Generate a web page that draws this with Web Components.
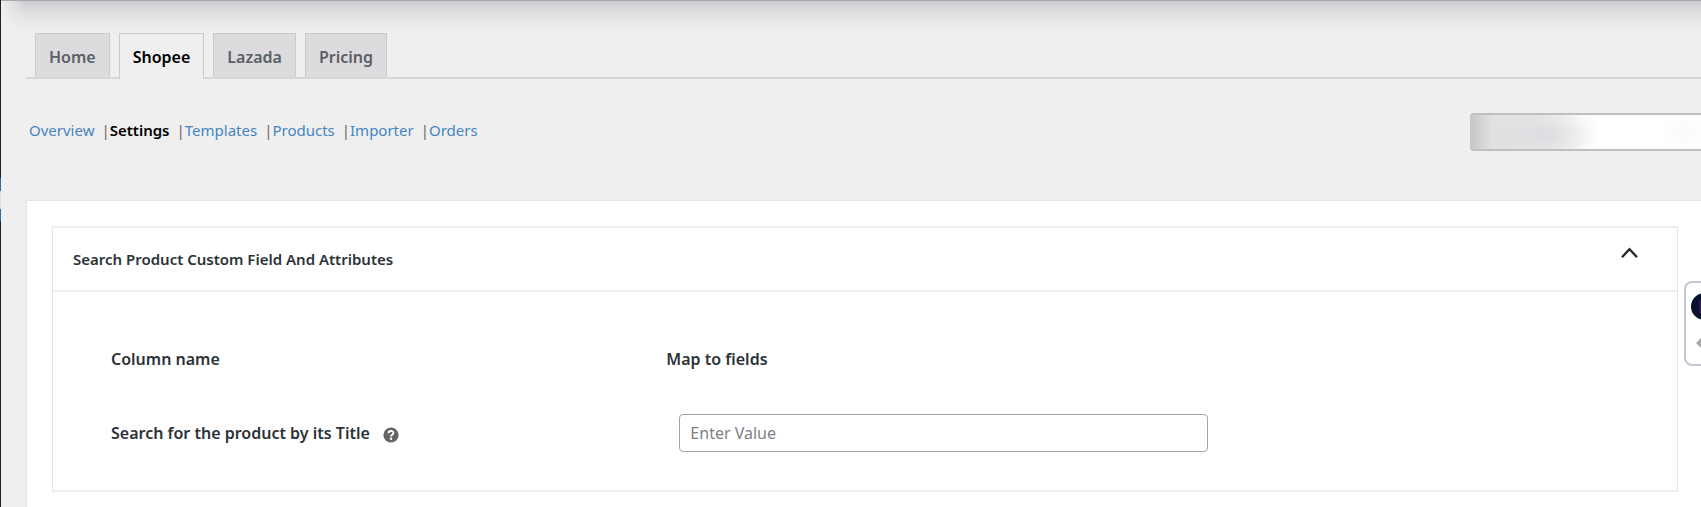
<!DOCTYPE html>
<html lang="en">
<head>
<meta charset="utf-8">
<title>Shopee Settings</title>
<style>
	body {
		margin: 0;
		background: #efefef;
		color: #2c3338;
		font-family: "Noto Sans", "Open Sans", sans-serif;
		font-size: 16px;
		line-height: 24px;
	}
</style>
</head>
<body>
<admin-shell>
	<tab-bar>
		<tab-item>Home</tab-item>
		<tab-item active>Shopee</tab-item>
		<tab-item>Lazada</tab-item>
		<tab-item>Pricing</tab-item>
	</tab-bar>
	<sub-nav current="Settings" items="Overview,Settings,Templates,Products,Importer,Orders">
		<account-select></account-select>
	</sub-nav>
	<settings-panel>
		<collapse-card>
			<span slot="title">Search Product Custom Field And Attributes</span>
			<mapping-table label="Search for the product by its Title" placeholder="Enter Value"></mapping-table>
		</collapse-card>
	</settings-panel>
	<side-widget slot="widget"></side-widget>
</admin-shell>

<script>
class AdminShell extends HTMLElement {
	constructor() {
		super();
		this.attachShadow({ mode: 'open' });
		this.shadowRoot.innerHTML = `
			<style>
				:host {
					display: flex;
					min-height: 100vh;
					position: relative;
					overflow: hidden;
				}
				/* edge of the admin menu, with the current item lit */
				.menu {
					flex: none;
					width: 1px;
					background: linear-gradient(#1d2327 178px, #2271b1 178px 191px, #dcdcde 191px 209px, #2271b1 209px 221px, #1d2327 221px);
				}
				main {
					flex: 1;
					min-width: 0;
					display: flex;
					flex-direction: column;
					box-sizing: border-box;
					padding: 33px 0 0 25px;
				}
				.shadow {
					position: absolute;
					top: 0;
					left: 1px;
					right: 0;
					height: 32px;
					border-top: 1px solid #a9a9ad;
					background: linear-gradient(90deg, #efefef, #efefef00 24px), linear-gradient(#cbccd0, #dcdcdf 30%, #e9e9ea 65%, #efefef);
				}
			</style>
			<div class="menu"></div>
			<div class="shadow"></div>
			<main><slot></slot></main>
			<slot name="widget"></slot>
		`;
	}
}

class TabBar extends HTMLElement {
	constructor() {
		super();
		this.attachShadow({ mode: 'open' });
		this.shadowRoot.innerHTML = `
			<style>
				:host {
					display: block;
				}
				nav {
					display: flex;
					gap: 9px;
					padding-left: 9px;
					border-bottom: 2px solid #d7d7d9;
				}
			</style>
			<nav><slot></slot></nav>
		`;
	}
}

class TabItem extends HTMLElement {
	constructor() {
		super();
		this.attachShadow({ mode: 'open' });
		this.shadowRoot.innerHTML = `
			<style>
				:host {
					display: block;
				}
				a {
					display: block;
					padding: 11px 13px 8px;
					border: 1px solid #c9cacc;
					border-bottom: 0;
					background: #dcdcde;
					color: #5a6067;
					font-weight: 600;
					text-decoration: none;
				}
				:host([active]) a {
					margin-bottom: -2px;
					padding-bottom: 10px;
					background: #efefef;
					color: #000;
				}
			</style>
			<a href="#"><slot></slot></a>
		`;
	}
}

class SubNav extends HTMLElement {
	constructor() {
		super();
		this.attachShadow({ mode: 'open' });
		const current = this.getAttribute('current');
		const links = this.getAttribute('items').split(',').map(item => {
			const cls = item === current ? ' class="current"' : '';
			return `<a href="#"${cls}>${item}</a>`;
		});
		this.shadowRoot.innerHTML = `
			<style>
				:host {
					display: flex;
					align-items: flex-start;
					justify-content: space-between;
					padding: 34px 0 49px 3px;
				}
				nav {
					display: flex;
					padding-top: 5px;
					font-size: 15px;
				}
				a {
					color: #4585bf;
					text-decoration: none;
				}
				.current {
					color: #000;
					font-weight: 600;
				}
				span {
					margin: 0 0 0 7px;
					color: #70675f;
				}
			</style>
			<nav>${links.join('<span>|</span>')}</nav>
			<slot></slot>
		`;
	}
}

class AccountSelect extends HTMLElement {
	constructor() {
		super();
		this.attachShadow({ mode: 'open' });
		this.shadowRoot.innerHTML = `
			<style>
				:host {
					display: block;
				}
				select {
					display: block;
					appearance: none;
					box-sizing: border-box;
					width: 231px;
					height: 38px;
					border: 2px solid #bfbfc2;
					border-width: 2px 0;
					border-radius: 4px 0 0 4px;
					background:
						linear-gradient(90deg, #c6c6c8, #c6c6c800 22px),
						radial-gradient(ellipse 52px 26px at 72px 20px, #dcdde0, #dcdde000),
						radial-gradient(ellipse 26px 20px at 216px 17px, #fafafa, #fff0),
						linear-gradient(90deg, #e0e1e1 30px, #e6e7e7 70px, #f6f6f6 105px, #fff 130px);
				}
			</style>
			<select aria-label="Account"></select>
		`;
	}
}

class SettingsPanel extends HTMLElement {
	constructor() {
		super();
		this.attachShadow({ mode: 'open' });
		this.shadowRoot.innerHTML = `
			<style>
				:host {
					display: block;
					flex: 1;
					padding: 25px 23px 16px 25px;
					border: 1px solid #e3e3e4;
					border-width: 1px 0 0 1px;
					background: #fff;
				}
			</style>
			<slot></slot>
		`;
	}
}

class CollapseCard extends HTMLElement {
	constructor() {
		super();
		this.attachShadow({ mode: 'open' });
		this.shadowRoot.innerHTML = `
			<style>
				:host {
					display: block;
					border: 1px solid #e6e6e7;
					border-width: 2px 1px;
					border-color: #eeeeee #e6e6e7;
				}
				header {
					display: flex;
					align-items: center;
					justify-content: space-between;
					height: 62px;
					padding: 0 39px 0 20px;
					border-bottom: 2px solid #eee;
				}
				h2 {
					margin: 0;
					font-size: 15px;
					font-weight: 600;
				}
				button {
					display: flex;
					margin: 0 0 12px;
					padding: 0;
					border: 0;
					background: none;
				}
			</style>
			<header>
				<h2><slot name="title"></slot></h2>
				<button type="button" aria-label="Toggle section">
					<svg width="17" height="12" viewBox="0 0 17 12" fill="none" stroke="#24282c" stroke-width="2.3"><path d="M1 10.2L8.5 2.2L16 10.2"/></svg>
				</button>
			</header>
			<slot></slot>
		`;
		this.body = this.shadowRoot.querySelector('slot:not([name])');
		this.shadowRoot.querySelector('button').addEventListener('click', () => {
			this.body.hidden = !this.body.hidden;
		});
	}
}

class MappingTable extends HTMLElement {
	constructor() {
		super();
		this.attachShadow({ mode: 'open' });
		this.shadowRoot.innerHTML = `
			<style>
				:host {
					display: block;
					padding: 30px 65px 20px 58px;
				}
				table {
					width: 100%;
					table-layout: fixed;
					border-collapse: collapse;
				}
				th, td {
					height: 74px;
					padding: 0;
					text-align: left;
					font-weight: 600;
				}
				th:first-child {
					width: 37%;
				}
				td:last-child {
					padding-left: 13px;
				}
				.label {
					display: flex;
					align-items: center;
					gap: 13px;
				}
				svg {
					margin-top: 3px;
				}
				input {
					display: block;
					box-sizing: border-box;
					width: 100%;
					max-width: 529px;
					height: 38px;
					padding: 0 10px;
					border: 1px solid #a2a4a8;
					border-radius: 4px;
					font: inherit;
					font-weight: 400;
				}
				input::placeholder {
					color: #7d8085;
				}
			</style>
			<table>
				<thead>
					<tr><th>Column name</th><th>Map to fields</th></tr>
				</thead>
				<tbody>
					<tr>
						<td>
							<div class="label">
								<label for="field">${this.getAttribute('label')}</label>
								<svg width="16" height="16" viewBox="0 0 16 16" fill="none">
									<circle cx="8" cy="8" r="7.6" fill="#646464"/>
									<path d="M5.5 6.2C5.5 3.4 10.4 3.3 10.4 6.1C10.4 7.8 8 7.7 8 9.5" stroke="#fff" stroke-width="1.9"/>
									<circle cx="8" cy="11.8" r="1.2" fill="#fff"/>
								</svg>
							</div>
						</td>
						<td><input id="field" type="text" placeholder="${this.getAttribute('placeholder')}"></td>
					</tr>
				</tbody>
			</table>
		`;
	}
}

class SideWidget extends HTMLElement {
	constructor() {
		super();
		this.attachShadow({ mode: 'open' });
		this.shadowRoot.innerHTML = `
			<style>
				/* floats over the page, most of it past the right edge */
				:host {
					display: flex;
					flex-direction: column;
					gap: 14px;
					box-sizing: border-box;
					position: absolute;
					top: 281px;
					right: -24px;
					width: 41px;
					height: 85px;
					padding: 10px 5px;
					border: 2px solid #c6c5d5;
					border-radius: 8px;
					background: #fff;
				}
			</style>
			<svg width="27" height="27" viewBox="0 0 27 27">
				<circle cx="13.5" cy="13.5" r="13.5" fill="#06122b"/>
				<path d="M8 7h2v13H8z" fill="#35184a"/>
			</svg>
			<svg width="27" height="18" viewBox="0 0 27 18"><path d="M5 9L11 3L17 9L11 15Z" fill="#a9a9a9"/></svg>
		`;
	}
}

window.customElements.define('admin-shell', AdminShell);
window.customElements.define('tab-bar', TabBar);
window.customElements.define('tab-item', TabItem);
window.customElements.define('sub-nav', SubNav);
window.customElements.define('account-select', AccountSelect);
window.customElements.define('settings-panel', SettingsPanel);
window.customElements.define('collapse-card', CollapseCard);
window.customElements.define('mapping-table', MappingTable);
window.customElements.define('side-widget', SideWidget);
</script>
</body>
</html>
